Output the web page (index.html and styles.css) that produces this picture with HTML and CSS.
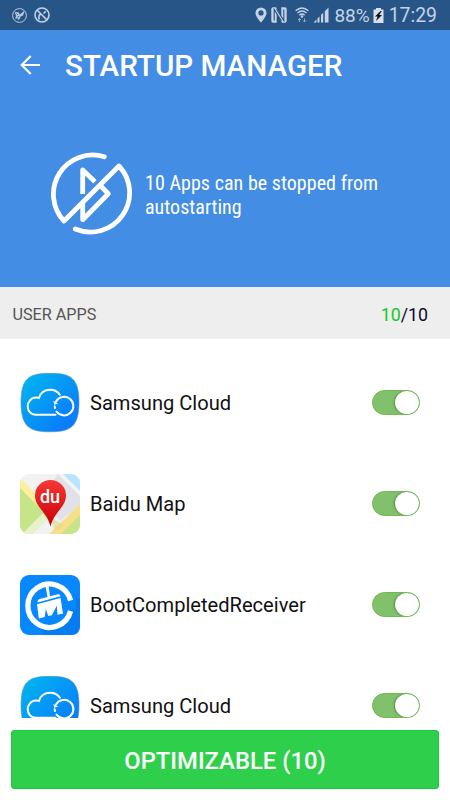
FILE: index.html
```html
<!DOCTYPE html>
<html lang="en">

<head>
  <meta charset="UTF-8">
  <meta name="viewport" content="width=device-width, initial-scale=1.0">
  <title>Startup Manager</title>
  <link rel="stylesheet" href="styles.css">
</head>

<body>

  <!-- shared icons -->
  <svg class="defs" width="0" height="0">
    <defs>
      <linearGradient id="cloudBg" x1="0" y1="0" x2="1" y2="1">
        <stop offset="0" stop-color="#00b9ee"/>
        <stop offset="1" stop-color="#0c70ff"/>
      </linearGradient>
      <linearGradient id="pinBg" x1="0" y1="0" x2="0" y2="1">
        <stop offset="0" stop-color="#f53836"/>
        <stop offset="1" stop-color="#c90005"/>
      </linearGradient>
      <clipPath id="mapClip"><rect width="60" height="60" rx="9"/></clipPath>
    </defs>
    <symbol id="cloud" viewBox="0 0 60 60">
      <path fill="url(#cloudBg)" stroke="#5792bd" stroke-width=".6" d="M30 .3C50 .3 59 4.300 59 29.300S50 58.800 30 58.800 1 54.300 1 29.300 10 .3 30 .3z"/>
      <g fill="none" stroke="#fff" stroke-width="2" stroke-linecap="round">
        <path d="M35.500 41.800H16C10.500 41.800 7.700 37.500 7.700 33.300S11 24.500 16 24.500q1.500 0 3 .4C20 20 24.500 16.700 30 16.700q6.500 0 9.800 5"/>
        <path d="M36 28.500A9.300 9.300 0 1 1 36.500 38.500M34.700 33.300l.3 1.700"/>
      </g>
      <path fill="#fff" d="M33.400 28l.9 3.700 3.900-1.200z"/>
    </symbol>
  </svg>

  <div class="status-bar">
    <div class="status-left">
      <svg width="15" height="15" viewBox="0 0 15 15" fill="none" stroke="#b7c9df" stroke-width="1">
        <circle cx="7.500" cy="7.500" r="6.900"/>
        <path fill="#b7c9df" stroke="none" d="M2.800 3.900l3.600.3 1.500 2.300 4-3.500.5 1-1.400 3.500-2.300 1-1.500 3-1.200.2-.3-1.500-2.500.5.800-2.700z"/>
        <path stroke="#285587" stroke-width=".9" d="M4.600 5.700l1.200 1M5.500 9.200l1.700-1"/>
      </svg>
      <svg width="16" height="16" viewBox="0 0 16 16" fill="none" stroke="#c3d2e5">
        <circle cx="8" cy="8" r="7" stroke-width="1.600"/>
        <path stroke-width="1.600" d="M3.200 3.200l9.600 9.600M5 12.500V9q0-1.500 1.500-1.500H7.500M9.500 6.500l2.300-2.300"/>
      </svg>
    </div>
    <div class="status-right">
      <svg class="pin" width="12" height="16" viewBox="0 0 12 16"><path fill="#c4d3e6" fill-rule="evenodd" d="M6 .4A5.500 5.500 0 0 0 .5 6C.5 9 3.500 12.500 6 15.600 8.500 12.500 11.500 9 11.500 6A5.500 5.500 0 0 0 6 .4zM6 3.300a2.600 2.600 0 1 1 0 5.200 2.600 2.600 0 0 1 0-5.200z"/></svg>
      <svg class="nfc" width="16" height="16" viewBox="0 0 16 16"><path fill="#c4d3e6" d="M2 .3h3L10.300 10V.3H14q1.700 0 1.700 1.700v12q0 1.700-1.700 1.700h-3L5.700 6v9.700H2Q.3 15.700.3 14V2Q.3.300 2 .3z"/><path fill="none" stroke="#285587" stroke-width="1.100" d="M3.200 13.500V2.500L10.500 14M5.500 2l7.300 11.500v-11"/></svg>
      <svg class="wifi" width="14" height="16" viewBox="0 0 14 16" fill="none" stroke="#c4d3e6" stroke-width="1.400">
        <path d="M.6 3.700q6.400-5.600 12.800 0M2.500 6q4.500-4 9 0M4.400 8.200q2.600-2.200 5.200 0"/>
        <circle cx="7" cy="9.500" r=".6" fill="#c4d3e6"/>
        <path stroke="#8fa8c5" stroke-width="1" d="M4.500 15v-3.500M3 13l1.500-1.500L6 13M9.500 11.500V15M8 13.500L9.500 15l1.500-1.500"/>
      </svg>
      <svg class="signal" width="16" height="16" viewBox="0 0 16 16" fill="#c4d3e6"><path d="M.5 15.500l3-3v3zM4.500 11.500l2-2v6h-2zM8 8l2.200-2.200v9.700H8zM11.800 4.200L15.500.5v15h-3.700z"/></svg>
      <span class="battery-text">88%</span>
      <svg class="battery" width="11" height="15" viewBox="0 0 11 15"><path fill="#d7e0eb" d="M3 0h5v1.500h2.500V15H.5V1.500H3z"/><path fill="#111" d="M7.500 3L2 8.500h2.600L3 13l6-6H6.200L8.800 3z"/></svg>
      <span class="clock">17:29</span>
    </div>
  </div>

  <header>
    <div class="title-bar">
      <svg width="20" height="20" viewBox="0 0 20 20" fill="none" stroke="#fff" stroke-width="2.200"><path d="M20 10H2M10.700 1L1.700 10l9 9"/></svg>
      <h1>STARTUP MANAGER</h1>
    </div>
    <div class="summary">
      <svg width="84" height="84" viewBox="0 0 84 84" fill="none" stroke="#fff" stroke-width="4.800" stroke-linecap="round" stroke-linejoin="round">
        <path d="M54.300 4.800A39.200 39.200 0 0 0 14 69L69 14A39.200 39.200 0 0 1 25.300 77"/>
        <path d="M32.700 42V18L45 29.700M32.700 50.500v17.200L58.300 41.700 51 34.300" stroke-linecap="butt"/>
      </svg>
      <p>10 Apps can be stopped from<br>autostarting</p>
    </div>
  </header>

  <div class="section-head">
    <span class="label">USER APPS</span>
    <span class="count"><span class="on">10</span>/10</span>
  </div>

  <div class="app-list">
    <div class="app">
      <svg class="icon" width="60" height="60"><use href="#cloud"/></svg>
      <span class="name">Samsung Cloud</span>
      <span class="switch"></span>
    </div>
    <div class="app">
      <svg class="icon" width="60" height="60" viewBox="0 0 60 60">
        <g clip-path="url(#mapClip)">
          <rect width="60" height="60" fill="#f2f2f0"/>
          <path fill="#e1e2e8" d="M38 0l22 20v11L40 47 20 25z"/>
          <path fill="#f4f4f5" d="M0 0h43l17 17v5L38 0z"/>
          <path fill="#b7e5ff" d="M43 0h17v17z"/>
          <path fill="#ffee9b" d="M0 4l36 36-6 6L0 15z"/>
          <path fill="#c6e588" d="M0 14l29 29-17 17H0zM60 40v20H39z"/>
          <path fill="#f7df89" d="M60 30v11L41 60H29z"/>
          <path fill="#e5f2ca" d="M23 39l5 5-16 16H5l-1-2z"/>
          <path fill="#e0d78d" d="M31 43l12 8-5 5-4-1z" opacity=".6"/>
          <path fill="url(#pinBg)" d="M30.500 6A15.500 15.500 0 0 0 15 21.500C15 33 27 38 30.500 52.500 34 38 46 33 46 21.500A15.500 15.500 0 0 0 30.500 6z"/>
          <text class="du" x="30" y="28.500">du</text>
        </g>
      </svg>
      <span class="name">Baidu Map</span>
      <span class="switch"></span>
    </div>
    <div class="app">
      <svg class="icon" width="60" height="60" viewBox="0 0 60 60">
        <rect width="60" height="60" rx="9" fill="#0788ff"/>
        <path fill="#057cef" d="M48 14l12 11v26q0 9-9 9H25L13 48z"/>
        <path fill="#0788ff" d="M48 14l8 8v12H44z"/>
        <circle cx="30" cy="30" r="21" fill="#0788ff"/>
        <path fill="none" stroke="#fff" stroke-width="5.300" d="M50.600 25.500A21.700 21.700 0 1 0 50.600 36"/>
        <path fill="#fff" d="M25.500 11l3-.4 1.500 10.600 7-1.800q3-.8 3.500 1.800l-23 6.300q0-3 3-3.700l7-1.800z"/>
        <path fill="#fff" d="M17 29.300l23.500-6.300 2.500 15.500-5.500 1.300-.7-9-5 9.500-3.500.8-2.500-7-1 8-6 1.300z"/>
      </svg>
      <span class="name">BootCompletedReceiver</span>
      <span class="switch"></span>
    </div>
    <div class="app">
      <svg class="icon" width="60" height="60"><use href="#cloud"/></svg>
      <span class="name">Samsung Cloud</span>
      <span class="switch"></span>
    </div>
  </div>

  <button class="optimize">OPTIMIZABLE (10)</button>

</body>

</html>
```
FILE: styles.css
```css
* {
  box-sizing: border-box;
}

body {
  margin: 0;
  height: 800px;
  display: flex;
  flex-direction: column;
  overflow: hidden;
  background-color: #fff;
  font-family: Roboto, "Liberation Sans", sans-serif;
}

svg {
  display: block;
  flex-shrink: 0;
}

.defs {
  position: absolute;
}

.status-bar {
  height: 30px;
  flex-shrink: 0;
  padding: 0 13px 0 12px;
  display: flex;
  justify-content: space-between;
  align-items: center;
  background-color: #285587;
  color: #c4d3e6;
  font-size: 19px;
}

.status-left,
.status-right {
  display: flex;
  align-items: center;
}

.status-left {
  gap: 7px;
}

.nfc {
  margin-left: 4px;
}

.wifi {
  margin-left: 8px;
}

.signal {
  margin: 0 5px 0 4px;
}

.battery {
  margin: 0 5px 0 3px;
}

.battery-text {
  font-size: 19px;
}

.clock {
  font-size: 19.4px;
}

header {
  height: 257px;
  flex-shrink: 0;
  background-color: #448de4;
  color: #fff;
}

.title-bar {
  height: 70px;
  padding-left: 20px;
  display: flex;
  align-items: center;
  gap: 25px;
}

h1 {
  margin: 1px 0 0;
  font-size: 29.6px;
  font-weight: 500;
}

.summary {
  margin-top: 52px;
  padding-left: 50px;
  display: flex;
  align-items: center;
  gap: 11px;
}

.summary p {
  margin: 2px 0 0;
  font-family: "Roboto Condensed", Roboto, sans-serif;
  font-stretch: 75%;
  font-size: 20px;
  letter-spacing: 0.04px;
  line-height: 24px;
  white-space: nowrap;
}

.section-head {
  height: 52px;
  flex-shrink: 0;
  padding: 2px 22px 0 12.5px;
  display: flex;
  justify-content: space-between;
  align-items: center;
  background-color: #eee;
}

.label {
  color: #555;
  font-size: 16.2px;
}

.count {
  color: #0b0b2b;
  font-size: 17.8px;
}

.on {
  color: #10cb1c;
}

.app-list {
  height: 379px;
  flex-shrink: 0;
  padding: 13px 30px 0 20px;
  overflow: hidden;
}

.app {
  height: 101px;
  display: flex;
  align-items: center;
}

.name {
  flex: 1;
  margin-left: 10px;
  padding-top: 1px;
  color: #111;
  font-size: 20.1px;
}

.du {
  fill: #fff;
  font-size: 18px;
  font-weight: 500;
  text-anchor: middle;
}

.switch {
  width: 48px;
  height: 25px;
  display: flex;
  justify-content: flex-end;
  overflow: hidden;
  border: 1px solid #70b952;
  border-radius: 13px;
  background-color: #82c16c;
}

.switch::after {
  content: "";
  width: 24px;
  height: 23px;
  border-radius: 50%;
  background-color: #fff;
  box-shadow: -1px 0 2px rgba(0, 60, 0, 0.4);
}

.optimize {
  width: 428px;
  height: 59px;
  flex-shrink: 0;
  margin: 11.5px 0 0 11px;
  padding: 3px 0 0;
  border: 1px solid #18ca3c;
  border-radius: 3px;
  background-color: #2ed04b;
  color: #fff;
  font-family: inherit;
  font-size: 23.8px;
  font-weight: 500;
}
```
